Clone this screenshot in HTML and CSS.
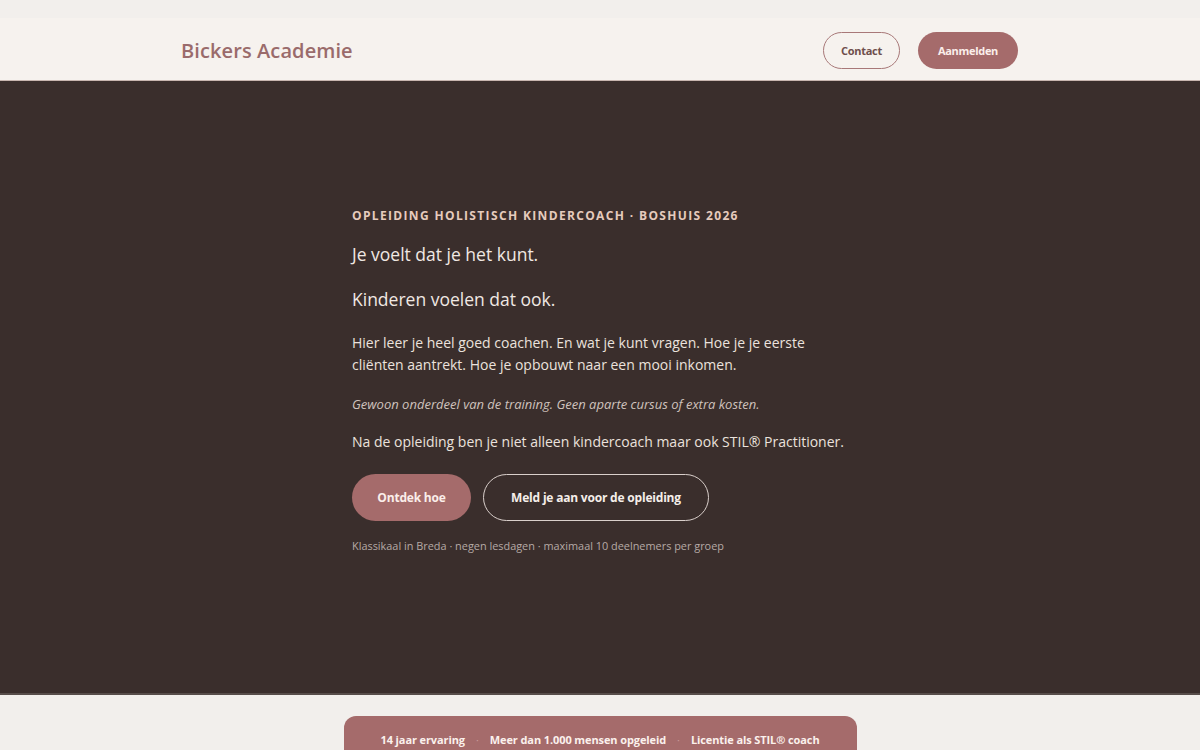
FILE: index.html
```html
<!DOCTYPE html>
<html lang="nl">
<head>
<meta charset="utf-8">
<title>Bickers Academie</title>
<link rel="stylesheet" href="styles.css">
</head>
<body>
<div class="top-strip"></div>
<header class="site-header">
  <div class="header-inner">
    <a class="brand" href="#">Bickers Academie</a>
    <nav class="header-actions">
      <a class="btn btn-sm btn-outline-rose" href="#">Contact</a>
      <a class="btn btn-sm btn-rose" href="#">Aanmelden</a>
    </nav>
  </div>
</header>
<main>
  <section class="hero">
    <div class="hero-inner">
      <p class="eyebrow">Opleiding Holistisch Kindercoach · Boshuis 2026</p>
      <p class="lead">Je voelt dat je het kunt.</p>
      <p class="lead">Kinderen voelen dat ook.</p>
      <p class="body">Hier leer je heel goed coachen. En wat je kunt vragen. Hoe je je eerste cliënten aantrekt. Hoe je opbouwt naar een mooi inkomen.</p>
      <p class="note">Gewoon onderdeel van de training. Geen aparte cursus of extra kosten.</p>
      <p class="body">Na de opleiding ben je niet alleen kindercoach maar ook STIL® Practitioner.</p>
      <div class="hero-actions">
        <a class="btn btn-lg btn-rose" href="#">Ontdek hoe</a>
        <a class="btn btn-lg btn-outline-light" href="#">Meld je aan voor de opleiding</a>
      </div>
      <p class="meta">Klassikaal in Breda · negen lesdagen · maximaal 10 deelnemers per groep</p>
    </div>
  </section>
  <section class="stats">
    <div class="stats-bar">
      <span>14 jaar ervaring</span>
      <span class="dot">·</span>
      <span>Meer dan 1.000 mensen opgeleid</span>
      <span class="dot">·</span>
      <span>Licentie als STIL® coach</span>
    </div>
  </section>
</main>
</body>
</html>
```

FILE: styles.css
```css
* { box-sizing: border-box; }
html, body { margin: 0; padding: 0; }
body {
  font-family: "Open Sans", "Noto Sans", "DejaVu Sans", sans-serif;
  background: #f2efec;
  color: #3a2e2c;
  height: 750px;
  overflow: hidden;
}
a { text-decoration: none; }
p { margin: 0; }

.top-strip { height: 18px; background: #f2efec; }

.site-header {
  background: #f6f2ee;
  height: 63px;
  border-bottom: 1px solid #c8b6b0;
}
.header-inner {
  width: 838px;
  margin: 0 auto;
  height: 100%;
  display: flex;
  align-items: center;
  justify-content: space-between;
  padding-right: 1px;
  padding-top: 2px;
}
.brand {
  color: #9a6b6b;
  font-size: 20px;
  font-weight: 600;
  letter-spacing: 0.1px;
}
.header-actions { display: flex; gap: 18px; align-items: center; }

.btn {
  display: inline-flex;
  align-items: center;
  justify-content: center;
  border-radius: 999px;
  font-weight: 700;
}
.btn-sm {
  height: 37px;
  font-size: 11px;
  letter-spacing: -0.3px;
}
.btn-sm.btn-outline-rose { width: 77px; }
.btn-sm.btn-rose { width: 100px; }
.btn-outline-rose {
  border: 1px solid #a87878;
  color: #6e4e4c;
}
.btn-rose {
  background: #a56b6b;
  color: #fbeeea;
}
.btn-lg {
  height: 47px;
  font-size: 12px;
  letter-spacing: -0.2px;
}
.btn-lg.btn-rose { width: 119px; }
.btn-lg.btn-outline-light { width: 226px; }
.btn-outline-light {
  border: 1px solid #d9cfcb;
  color: #f5eeea;
}

.hero {
  background: #3a2e2c;
  height: 614px;
  border-bottom: 2px solid #574d4a;
  display: flex;
  justify-content: center;
}
.hero-inner {
  width: 496px;
  padding-top: 127px;
}
.eyebrow {
  color: #e6cbbd;
  text-transform: uppercase;
  font-weight: 700;
  font-size: 12px;
  letter-spacing: 1.35px;
  line-height: 16px;
}
.lead {
  color: #f0e8e3;
  font-size: 17.5px;
  line-height: 26px;
  margin-top: 17px;
}
.lead + .lead { margin-top: 19px; }
.body {
  color: #ebe2dd;
  font-size: 14px;
  line-height: 22px;
  margin-top: 20px;
}
.note {
  color: #cfc2bd;
  font-style: italic;
  font-size: 13px;
  line-height: 18px;
  margin-top: 19px;
}
.note + .body { margin-top: 18px; }
.hero-actions {
  display: flex;
  gap: 12px;
  margin-top: 21px;
}
.meta {
  color: #b6aaa6;
  font-size: 10.9px;
  line-height: 16px;
  margin-top: 17px;
}

.stats {
  display: flex;
  justify-content: center;
  padding-top: 21px;
}
.stats-bar {
  width: 513px;
  height: 40px;
  background: #a56b6b;
  border-radius: 12px 12px 0 0;
  color: #fbf1ed;
  font-weight: 700;
  font-size: 11px;
  letter-spacing: -0.1px;
  display: flex;
  justify-content: center;
  align-items: flex-start;
  padding-top: 16px;
  gap: 11px;
}
.stats-bar .dot { color: #c99a98; font-weight: 400; }
```
